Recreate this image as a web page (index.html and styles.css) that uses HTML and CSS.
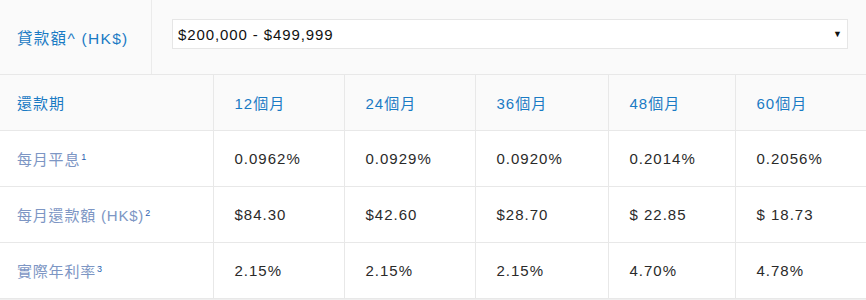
FILE: index.html
```html
<!DOCTYPE html>
<html lang="zh-Hant">
<head>
<meta charset="utf-8">
<link rel="stylesheet" href="styles.css">
</head>
<body>
<div class="calc">
  <div class="amount">
    <div class="amount-label">貸款額^ (HK$)</div>
    <div class="amount-field">
      <div class="select"><span>$200,000 - $499,999</span><span class="arrow">▼</span></div>
    </div>
  </div>
  <table class="rates">
    <colgroup>
      <col class="c-label"><col class="c1"><col class="c2"><col class="c3"><col class="c4"><col class="c5">
    </colgroup>
    <tr class="head">
      <td class="label">還款期</td>
      <td>12個月</td><td>24個月</td><td>36個月</td><td>48個月</td><td>60個月</td>
    </tr>
    <tr>
      <td class="label">每月平息<sup>1</sup></td>
      <td>0.0962%</td><td>0.0929%</td><td>0.0920%</td><td>0.2014%</td><td>0.2056%</td>
    </tr>
    <tr>
      <td class="label">每月還款額 (HK$)<sup>2</sup></td>
      <td>$84.30</td><td>$42.60</td><td>$28.70</td><td>$ 22.85</td><td>$ 18.73</td>
    </tr>
    <tr>
      <td class="label">實際年利率<sup>3</sup></td>
      <td>2.15%</td><td>2.15%</td><td>2.15%</td><td>4.70%</td><td>4.78%</td>
    </tr>
  </table>
</div>
</body>
</html>
```
FILE: styles.css
```css
html, body {
  margin: 0;
  padding: 0;
  background: #efefef;
}
body {
  font-family: "Liberation Sans", "Noto Sans CJK TC", sans-serif;
  font-size: 15px;
  color: #222;
}
.calc {
  width: 866px;
  background: #fff;
}
.amount {
  display: flex;
  height: 74px;
  background: #fafafa;
  border-bottom: 1px solid #e8e8e8;
}
.amount-label {
  width: 134px;
  padding-left: 17px;
  border-right: 1px solid #ebebeb;
  display: flex;
  align-items: center;
  color: #1a7bc4;
  font-size: 15.5px;
  letter-spacing: 1.3px;
}
.amount-field {
  flex: 1;
  padding: 19px 18px 0 20px;
}
.select {
  height: 28px;
  border: 1px solid #e6e6e6;
  background: #fff;
  display: flex;
  align-items: center;
  justify-content: space-between;
  padding: 0 5px 0 5px;
  font-size: 15px;
  letter-spacing: 0.9px;
  color: #111;
}
.arrow {
  font-size: 9px;
  color: #111;
  letter-spacing: 0;
}
.rates {
  width: 866px;
  border-collapse: collapse;
  table-layout: fixed;
}
.c-label { width: 213px; }
.c1 { width: 131px; }
.c2 { width: 131px; }
.c3 { width: 133px; }
.c4 { width: 127px; }
.c5 { width: 131px; }
.rates td {
  height: 55px;
  padding: 0 0 0 21px;
  border-bottom: 1px solid #e8e8e8;
  border-left: 1px solid #e8e8e8;
  vertical-align: middle;
  white-space: nowrap;
  font-size: 15px;
  letter-spacing: 1px;
  color: #2a2a2a;
}
.rates td.label {
  border-left: none;
  padding-left: 17px;
  color: #7d96c4;
  letter-spacing: 0.8px;
}
.rates tr.head td {
  background: #fafafa;
  color: #1a7bc4;
  letter-spacing: 1px;
}
.rates tr.head td.label {
  color: #1a7bc4;
}
sup {
  font-size: 9px;
  color: #2a5fb0;
  vertical-align: 5px;
  line-height: 0;
  margin-left: 1px;
  letter-spacing: 0;
}
```
